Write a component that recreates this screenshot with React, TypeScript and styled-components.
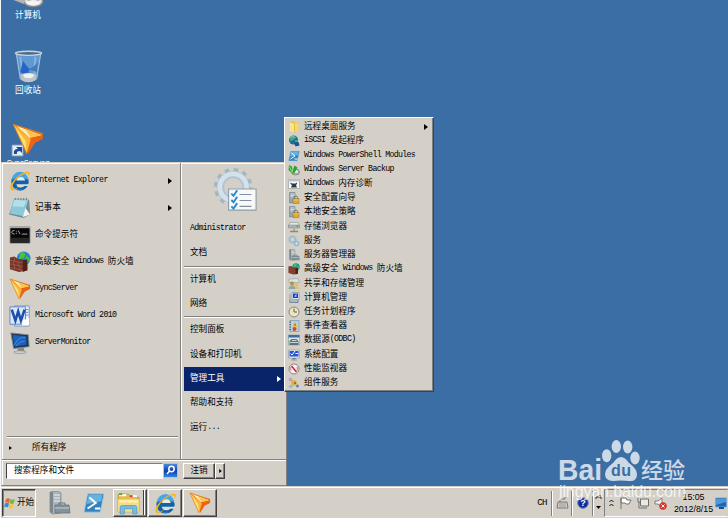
import React from 'react';
import styled, { createGlobalStyle, css } from 'styled-components';

const palette = {
	desktop: '#3a6ea5',
	face: '#d4d0c8',
	shadow: '#808080',
	dark: '#404040',
	navy: '#0a246a',
};

const GlobalStyle = createGlobalStyle`
	* {
		box-sizing: border-box;
	}

	body {
		margin: 0;
		background-color: ${palette.desktop};
		font-family: 'Liberation Mono', 'Noto Sans CJK SC', monospace;
		font-size: 8.5px;
		color: #000;
	}

	svg {
		display: block;
		flex-shrink: 0;
	}
`;

const raised = css`
	border: 1px solid;
	border-color: #fff ${palette.dark} ${palette.dark} #fff;
	box-shadow: inset -1px -1px 0 ${palette.shadow};
`;

const Screen = styled.div`
	position: relative;
	display: grid;
	grid-template-rows: 1fr 32px;
	width: 728px;
	height: 518px;
	overflow: hidden;
	background-color: ${palette.desktop};
	border-left: 1px solid #f4f6f8;
`;

const DesktopIcons = styled.div`
	display: flex;
	flex-direction: column;
	width: 54px;
	height: 164px;
	overflow: hidden;
`;

const DesktopIcon = styled.div<{ $height: number }>`
	display: flex;
	flex-direction: column;
	align-items: center;
	flex-shrink: 0;
	justify-content: flex-end;
	gap: 1px;
	height: ${(p) => p.$height}px;
	color: #fff;
`;

const StartPanel = styled.div`
	position: absolute;
	left: 0;
	top: 162px;
	width: 286px;
	height: 324px;
	display: grid;
	grid-template-rows: 1fr 25px;
	background-color: ${palette.face};
	border: 1px solid;
	border-color: #d4d0c8 ${palette.shadow} ${palette.shadow} #d4d0c8;
	box-shadow: inset 1px 1px 0 #fff;
`;

const Columns = styled.div`
	display: grid;
	grid-template-columns: 179px 1fr;
	border-bottom: 1px solid ${palette.shadow};
	box-shadow: 0 1px 0 #fff;
`;

const Programs = styled.div`
	display: flex;
	flex-direction: column;
	padding: 4px 2px 0 5px;
	border-right: 1px solid ${palette.shadow};
`;

const Program = styled.div`
	display: flex;
	align-items: center;
	gap: 4px;
	height: 27px;
	padding: 0 6px 0 2px;
`;

const AllPrograms = styled.div`
	display: flex;
	align-items: center;
	gap: 20px;
	margin-top: auto;
	height: 23px;
	border-top: 1px solid ${palette.shadow};
	box-shadow: inset 0 1px 0 #fff;
`;

const Places = styled.div`
	display: flex;
	flex-direction: column;
	padding: 2px 0 0 3px;
	box-shadow: inset 1px 0 0 #fff;
`;

const UserPicture = styled.div`
	display: flex;
	justify-content: center;
	height: 52px;
	padding-top: 2px;
`;

const Place = styled.div<{ $active?: boolean }>`
	display: flex;
	align-items: center;
	justify-content: space-between;
	height: 24.3px;
	padding: 0 5px 0 6px;
	color: ${(p) => (p.$active ? '#fff' : '#000')};
	background-color: ${(p) => (p.$active ? palette.navy : 'transparent')};
`;

const Divider = styled.div`
	height: 2px;
	border-top: 1px solid ${palette.shadow};
	border-bottom: 1px solid #fff;
`;

const PanelFooter = styled.div`
	display: flex;
	align-items: flex-start;
	padding: 3px 0 0 4px;
`;

const SearchBox = styled.div`
	display: flex;
	align-items: center;
	width: 157px;
	height: 16px;
	padding-left: 7px;
	background-color: #fff;
	border: 1px solid;
	border-color: ${palette.shadow} #fff #fff ${palette.dark};
`;

const SearchButton = styled.div`
	display: flex;
	align-items: center;
	justify-content: center;
	width: 15px;
	height: 15px;
	background: linear-gradient(#4f86dc, #0b3fae 55%, #2f86e6);
	border: 1px solid #aac4ec;
`;

const PushButton = styled.div<{ $width: number }>`
	${raised}
	display: flex;
	align-items: center;
	justify-content: center;
	width: ${(p) => p.$width}px;
	height: 16px;
`;

const LogOff = styled.div`
	display: flex;
	margin-left: 5px;
`;

const Submenu = styled.div`
	${raised}
	position: absolute;
	left: 283px;
	top: 117px;
	width: 150px;
	height: 275px;
	padding: 2px 2px 0 3px;
	background-color: ${palette.face};
`;

const SubmenuItem = styled.div`
	display: flex;
	align-items: center;
	gap: 4px;
	height: 14.22px;
	padding-right: 3px;
`;

const Arrow = styled.i`
	margin-left: auto;
	border: 3px solid transparent;
	border-left: 4px solid currentColor;
	border-right: 0;
`;

const AllArrow = styled.i`
	margin-left: 2px;
	border: 2px solid transparent;
	border-left: 3px solid currentColor;
	border-right: 0;
`;

const TextLine = styled.span<{ $size?: number }>`
	padding-top: 1px;
	font-size: ${(p) => p.$size ?? 8.6}px;
	line-height: 13px;
	white-space: pre;
`;

const Latin = styled.span`
	font-size: 0.96em;
	line-height: 0;
	letter-spacing: -0.082em;
	vertical-align: 1.3px;
`;

const Taskbar = styled.div`
	display: flex;
	align-items: flex-start;
	padding: 3px 0 0 1px;
	background-color: ${palette.face};
	box-shadow: inset 0 1px 0 ${palette.face}, inset 0 2px 0 #fff;
`;

const StartButton = styled.div`
	display: flex;
	align-items: center;
	justify-content: center;
	gap: 1px;
	width: 34px;
	height: 28px;
	border: 1px solid;
	border-color: ${palette.dark} #fff #fff ${palette.dark};
	box-shadow: inset 1px 1px 0 ${palette.shadow};
`;

const QuickLaunch = styled.div`
	display: flex;
	align-items: center;
	gap: 12px;
	height: 28px;
	padding-left: 11px;
	margin-right: 8px;
`;

const TaskButton = styled.div<{ $stacked?: boolean }>`
	${raised}
	display: flex;
	align-items: center;
	justify-content: center;
	width: 34px;
	height: 28px;
	margin-right: 1px;
	padding-right: ${(p) => (p.$stacked ? 3 : 0)}px;
	${(p) =>
		p.$stacked &&
		css`
			box-shadow: inset -1px -1px 0 ${palette.shadow}, inset -2px 0 0 #fff,
				inset -3px 0 0 ${palette.dark};
		`}
`;

const Language = styled.div`
	display: flex;
	align-items: center;
	height: 28px;
	margin-left: auto;
`;

const Separator = styled.div`
	width: 2px;
	height: 25px;
	border-left: 1px solid ${palette.shadow};
	border-right: 1px solid #fff;
`;

const LanguageSlot = styled.div<{ $width: number }>`
	display: flex;
	align-items: center;
	justify-content: center;
	width: ${(p) => p.$width}px;
`;

const Tray = styled.div`
	display: flex;
	align-items: center;
	gap: 5px;
	width: 124px;
	height: 28px;
	padding-left: 4px;
	border: 1px solid;
	border-color: ${palette.shadow} transparent #fff ${palette.shadow};
`;

const Clock = styled.div`
	display: flex;
	flex-direction: column;
	align-items: center;
	width: 39px;
	margin: 0 -3px 0 2px;
	font-family: 'Liberation Sans', sans-serif;
	font-size: 8.8px;
	line-height: 12px;
	white-space: nowrap;
`;

const Watermark = styled.svg`
	position: absolute;
	left: 554px;
	top: 436px;
`;

type TextProps = {
	text: string;
	size?: number;
};

/* Latin runs take half the width of a Chinese character */
const Label: React.FC<TextProps> = ({ text, size }) => (
	<TextLine $size={size}>
		{text
			.split(/([\x20-\x7e]+)/)
			.filter(Boolean)
			.map((run, index) =>
				/^[\x20-\x7e]/.test(run) ? <Latin key={index}>{run}</Latin> : run
			)}
	</TextLine>
);

type IconName =
	| 'computer'
	| 'bin'
	| 'sync'
	| 'ie'
	| 'notepad'
	| 'cmd'
	| 'firewall'
	| 'word'
	| 'monitor'
	| 'gearlist'
	| 'folder'
	| 'globe'
	| 'powershell'
	| 'backup'
	| 'memory'
	| 'lock'
	| 'storage'
	| 'gears'
	| 'server'
	| 'share'
	| 'manage'
	| 'clock'
	| 'event'
	| 'odbc'
	| 'config'
	| 'perf'
	| 'component'
	| 'windows'
	| 'explorer';

/* every drawing fits a 24 x 24 box */
const drawings: Record<IconName, React.ReactNode> = {
	computer: (
		<>
			<path d='M1 3h14v13H1z' fill='#dce5eb' stroke='#778' />
			<ellipse cx='16' cy='19' rx='7' ry='4' fill='#ddd' stroke='#888' />
			<path d='M1 18l5-4 4 3-1 4z' fill='#b4b4b4' />
			<path d='M12 14h8v5h-8z' fill='#9a9a9a' />
			<ellipse cx='16' cy='20' rx='5' ry='2' fill='#f5f5f5' />
		</>
	),
	bin: (
		<>
			<path d='M3 2l3 19q6 4 12 0l3-19z' fill='#6299d2' stroke='#a8c6e0' strokeWidth='.7' />
			<path d='M6 5l2 15M17 5l-1 15' stroke='#86b3de' strokeWidth='1.5' />
			<path d='M8 8l3 4 2 2-1 2 2 1-4 2-4-3z' fill='#2864c8' />
			<path d='M12 14q5-2 7-6l-1 8z' fill='#427bb8' />
			<path d='M6 18q6-3 12 0l-1 4q-5 3-10 0z' fill='#bfc4c7' />
			<path d='M8 18q4-2 8 0l-1 2q-3 1-6 0z' fill='#f0f2f2' />
			<ellipse cx='12' cy='2.4' rx='9.500' ry='1.5' fill='#4b6c8c' stroke='#cdd6dc' />
		</>
	),
	sync: (
		<>
			<path d='M1 1l22 7v4l-6 3-5 8z' fill='#ea6413' />
			<path d='M1 1l13 11-3 11z' fill='#f9b73a' />
			<path d='M1 1l9 12 1 8z' fill='#ffdf78' />
			<path d='M3 2l10 9 9-2z' fill='#fff0a8' />
			<path d='M10 5l4 6 8-2z' fill='#ffc14d' />
			<path d='M1 1l22 7M1 1l10 22' stroke='#d98618' strokeWidth='.7' />
		</>
	),
	ie: (
		<>
			<circle cx='12' cy='13' r='9.500' fill='#1560a8' />
			<path d='M3 11a9 9 0 0 1 18 0q-9-5-18 0z' fill='#4aa5e4' />
			<path d='M8 11.500q1-4 5-4t4.500 4z' fill='#e6eee8' />
			<path d='M8 15.500h14l-1 2h-4q-2 2-5 1.500-3 0-4-3.500z' fill='#d9ded8' />
			<path d='M4 19q5 4 12 2-6 3-12-2z' fill='#52b9f0' />
			<path d='M3 22C-3 18 10 4 19 2c5-1 4 3 2 5 1-4-1-4-4-3C9 7 2 17 4 20c2 2 5-1 7-2-3 3-6 5-8 4z' fill='#f0b51c' />
		</>
	),
	notepad: (
		<>
			<path d='M6 2l16 1 1 16-7 4L0 19z' fill='#728d94' />
			<path d='M5 2l16 1-5 18L1 18z' fill='#8cc8da' />
			<path d='M6 3l13 1-3 7L4 10z' fill='#b2dfe9' />
			<path d='M18 12l5 7-8 3z' fill='#f4f4ed' />
			<path d='M7 1v2M10 1v2M13 1v2M16 1v2M19 1v2' stroke='#555' strokeWidth='.8' />
		</>
	),
	cmd: (
		<>
			<path d='M1 3h22v18H1z' fill='#070707' stroke='#aaa' />
			<path d='M1 4h22' stroke='#ccc' />
			<path d='M6 7q-3 0-3 2t3 2M8 8v1M8 10v1M10 7l2 4M14 11h6' fill='none' stroke='#ddd' strokeWidth='.8' />
			<path d='M2 15h20v5H2z' fill='#262626' />
		</>
	),
	firewall: (
		<>
			<circle cx='16' cy='8' r='7.500' fill='#2683cf' />
			<path d='M12 2q5-2 6 2l-2 4-5 1zM19 5l4 4-4 6-2-4z' fill='#4bc13e' />
			<path d='M1 7l5-1 4 3 5 0v3l5 1v8l-9 2-10-3z' fill='#783427' />
			<path d='M15 10l5-1v12l-5 2z' fill='#4e2119' />
			<path d='M1 10l14 3M1 14l14 3M1 18l14 3M6 7v4M5 11v4M10 12v4M6 15v4M12 16v5' stroke='#a86659' strokeWidth='.7' />
		</>
	),
	word: (
		<>
			<path d='M6 1h16v22H6z' fill='#edf3fc' stroke='#6d93cc' />
			<path d='M18 5h3M18 8h3M18 11h3' stroke='#5581c4' />
			<path d='M1 2h17v19H1z' fill='#dbe7f8' stroke='#5a86c4' />
			<path d='M3 5l4 12 3-10 3 10 4-12' fill='none' stroke='#1b4fae' strokeWidth='2.8' />
			<path d='M15 17l7-3v8h-8z' fill='#fff' />
		</>
	),
	monitor: (
		<>
			<path d='M2 1l19 2 1 13-17 2z' fill='#20364c' stroke='#7e8d99' />
			<path d='M4 3l15 2v9L6 16z' fill='#1b60ba' />
			<path d='M6 14q4-9 12-8M8 15q3-5 9-5' fill='none' stroke='#5ba6e6' strokeWidth='.7' />
			<path d='M9 18l7-1 1 4h-7z' fill='#888' />
			<ellipse cx='12' cy='22' rx='7' ry='1.5' fill='#ccd0d2' stroke='#888' strokeWidth='.7' />
		</>
	),
	gearlist: (
		<>
			<circle cx='11' cy='11' r='7' fill='none' stroke='#afc4d3' strokeWidth='4' />
			<circle cx='11' cy='11' r='9.500' fill='none' stroke='#a3b6c4' strokeWidth='2' strokeDasharray='2.500 2.474' />
			<circle cx='11' cy='11' r='7.300' fill='none' stroke='#d3e1eb' strokeWidth='2.600' />
			<path d='M8.500 12h15v11.500h-15z' fill='#f6f8fa' stroke='#8f9da8' strokeWidth='.6' />
			<path d='M10 14.500l1.200 1.200 2-3M10 18l1.200 1.200 2-3M10 21.500l1.200 1.200 2-3' fill='none' stroke='#278ac8' />
			<path d='M14.500 15h6.500M14.500 18.300h6.500M14.500 21.500h6.500' stroke='#858da0' strokeWidth='.6' />
		</>
	),
	folder: (
		<>
			<path d='M3 1h9l2 2h7v18l-8 2-10-2z' fill='#e5bd4a' />
			<path d='M3 2l9 3v18l-9-2z' fill='#f8e28c' />
			<path d='M14 4h7v17l-7 1z' fill='#f4d777' />
		</>
	),
	globe: (
		<>
			<circle cx='11' cy='10' r='9' fill='#176fa9' />
			<path d='M5 3q8-3 10 2l-4 5-7 2zM14 9l6 2-5 8z' fill='#4aaf65' />
			<path d='M12 15l9-1 2 7-8 2z' fill='#234f95' />
			<path d='M3 5q7-4 13 0' stroke='#b4e4ec' fill='none' />
		</>
	),
	powershell: (
		<>
			<path d='M5 2h18l-4 20H1z' fill='#3482be' stroke='#a5cbe4' />
			<path d='M6 3h15l-1 7L4 13z' fill='#66b3df' />
			<path d='M7 6l7 6-9 6M13 18h6' fill='none' stroke='#fff' strokeWidth='2' />
		</>
	),
	backup: (
		<>
			<ellipse cx='15' cy='16' rx='8' ry='6' fill='#aaa' stroke='#666' />
			<ellipse cx='16' cy='15' rx='4' ry='3' fill='#eee' />
			<path d='M2 2l6 3 1 8 4-10 6 4-6 11-5 1-7-7z' fill='#28a33a' />
			<path d='M3 5l5 12 2-7' fill='none' stroke='#8ae25a' strokeWidth='2' />
		</>
	),
	memory: (
		<>
			<path d='M1 3h22v18H1z' fill='#f7f8f9' stroke='#788' />
			<path d='M1 3h22v4H1z' fill='#b8c4cf' />
			<path d='M5 9l3 2h7l3-2v3l-2 2 2 5H6l2-5-3-2z' fill='#303844' />
		</>
	),
	lock: (
		<>
			<path d='M3 1h11v21H3z' fill='#93a5b0' stroke='#677985' />
			<path d='M5 4h8M5 7h8M5 10h5' stroke='#e7edef' strokeWidth='1.500' />
			<path d='M13 14v-3q0-3 3-3t3 3v3' fill='none' stroke='#777' strokeWidth='2' />
			<path d='M10 13h12v10H10z' fill='#dfa92e' stroke='#97702c' />
			<path d='M11 16h10' stroke='#ffe187' />
		</>
	),
	storage: (
		<>
			<path d='M4 3h16l3 6H1z' fill='#e2e8ea' stroke='#7a858b' />
			<path d='M1 8h22v6H1z' fill='#aab3b8' stroke='#7a858b' />
			<circle cx='19' cy='10' r='2' fill='#40b934' />
			<path d='M12 15v6' stroke='#c99a3e' strokeWidth='3' />
			<path d='M4 21h16' stroke='#888' strokeWidth='3' />
		</>
	),
	gears: (
		<>
			<circle cx='9' cy='9' r='6' fill='none' stroke='#94bbd0' strokeWidth='3' />
			<circle cx='9' cy='9' r='8' fill='none' stroke='#a5c5d6' strokeWidth='2' strokeDasharray='2 2' />
			<circle cx='17' cy='17' r='4' fill='#dce8ed' stroke='#8fb7cb' strokeWidth='3' />
		</>
	),
	server: (
		<>
			<path d='M3 1l8-1 3 2v20l-9 1-2-2z' fill='#a9b5ba' stroke='#718188' strokeWidth='.7' />
			<path d='M3 1h3v21l-3-1z' fill='#7b898f' />
			<path d='M7 4h6M7 7h6M7 10h6' stroke='#e9eff1' />
			<path d='M12 14v-2h6v2' fill='none' stroke='#687680' />
			<path d='M8 14h14l1 8H8z' fill='#84939b' stroke='#5e6e77' strokeWidth='.7' />
			<path d='M8 17h14' stroke='#c8d1d4' />
		</>
	),
	share: (
		<>
			<path d='M2 2l18-1 3 8H2z' fill='#dce0df' stroke='#809197' />
			<path d='M11 14h8l4 8H9z' fill='#e6c36a' />
			<circle cx='8' cy='11' r='4' fill='#bd8e3a' />
			<path d='M1 22q1-7 7-7t7 7z' fill='#7fb0ae' />
			<circle cx='17' cy='13' r='4' fill='#e7bd75' />
		</>
	),
	manage: (
		<>
			<path d='M8 1h14v14H8z' fill='#e4eaf0' stroke='#5e7183' />
			<path d='M10 3h10v9H10z' fill='#1a35d2' />
			<path d='M12 9l5-6v7z' fill='#8dd4ff' />
			<path d='M2 4h5v15H2z' fill='#a8b9c1' />
			<path d='M3 16h18v6H3z' fill='#768795' />
			<path d='M5 18h14' stroke='#e6edf0' strokeWidth='2' />
		</>
	),
	clock: (
		<>
			<circle cx='12' cy='12' r='10' fill='#eee3b9' stroke='#7f8a93' strokeWidth='2' />
			<path d='M12 5v7h6' fill='none' stroke='#635f57' strokeWidth='2' />
		</>
	),
	event: (
		<>
			<path d='M4 1h18v22H4z' fill='#b7d0e5' stroke='#60809c' />
			<path d='M3 4h3M3 9h3M3 14h3M3 19h3' stroke='#425b76' strokeWidth='2' />
			<path d='M14 3l6 13H8z' fill='#f0c52e' />
			<circle cx='13' cy='18' r='4' fill='#d44635' />
			<path d='M14 7v5' stroke='#b53e2b' strokeWidth='2' />
		</>
	),
	odbc: (
		<>
			<path d='M1 2h22v20H1z' fill='#d9e4eb' stroke='#698' />
			<path d='M1 2h22v5H1z' fill='#3d6e9f' />
			<path d='M3 14l4-4h10l4 4v8H3z' fill='#64717b' />
			<path d='M8 13h9M4 17h16' stroke='#c9d0d4' strokeWidth='2' />
		</>
	),
	config: (
		<>
			<path d='M1 2h22v16H1z' fill='#e6e9eb' stroke='#788691' />
			<path d='M3 4h18v11H3z' fill='#2553dc' />
			<path d='M5 9l3 3 6-8M15 9h5' fill='none' stroke='#fff' strokeWidth='2' />
			<path d='M9 18h6v3H9z' fill='#777' />
			<path d='M6 22h12' stroke='#999' strokeWidth='2' />
		</>
	),
	perf: (
		<>
			<circle cx='12' cy='12' r='10' fill='#f4f4f4' stroke='#858585' strokeWidth='2' />
			<path d='M7 6l10 12' stroke='#c72437' strokeWidth='3' />
			<path d='M6 15a8 8 0 0 1 0-7M18 8q2 5-1 9' fill='none' stroke='#d56b74' strokeWidth='2' />
		</>
	),
	component: (
		<>
			<circle cx='5' cy='5' r='4' fill='#c2a0c4' />
			<circle cx='12' cy='12' r='6' fill='#d9b448' />
			<path d='M2 17h7v4H2z' fill='#8aafd3' />
			<circle cx='19' cy='18' r='3' fill='#5d84bd' />
			<circle cx='14' cy='12' r='2' fill='#9b4b32' />
		</>
	),
	windows: (
		<>
			<path d='M4 4q4-3 8 0l-2 8q-4-3-8 0z' fill='#ed6430' />
			<path d='M13 4q4 3 9 0l-3 9q-4 2-8-1z' fill='#74b943' />
			<path d='M2 13q4-3 8 0l-2 8q-4-3-8 0z' fill='#2d91d0' />
			<path d='M11 14q4 3 8 0l-2 8q-4 2-8-1z' fill='#f7c530' />
		</>
	),
	explorer: (
		<>
			<path d='M2 3h10l2 3h8v14H2z' fill='#e4bd48' stroke='#b58a27' strokeWidth='.7' />
			<path d='M3 4h7M13 5h7' stroke='#fff' strokeWidth='2' />
			<path d='M3 3h3' stroke='#40b34a' strokeWidth='2' />
			<path d='M13 5h3' stroke='#d54438' strokeWidth='2' />
			<path d='M2 8h20v12H2z' fill='#f5dd88' />
			<path d='M3 10h18' stroke='#fff0b6' strokeWidth='2' />
			<path d='M4 22v-6q0-2 2-2h12q2 0 2 2v6h-4v-5H8v5z' fill='#77bde2' stroke='#4398c8' strokeWidth='.7' />
		</>
	),
};

const Icon: React.FC<{ name: IconName; size: number }> = ({ name, size }) => (
	<svg width={size} height={size} viewBox='0 0 24 24' fill='none'>
		{drawings[name]}
	</svg>
);

const programs: { icon: IconName; text: string; more?: boolean }[] = [
	{ icon: 'ie', text: 'Internet Explorer', more: true },
	{ icon: 'notepad', text: '记事本', more: true },
	{ icon: 'cmd', text: '命令提示符' },
	{ icon: 'firewall', text: '高级安全 Windows 防火墙' },
	{ icon: 'sync', text: 'SyncServer' },
	{ icon: 'word', text: 'Microsoft Word 2010' },
	{ icon: 'monitor', text: 'ServerMonitor' },
];

const placeGroups = [
	['Administrator', '文档'],
	['计算机', '网络'],
	['控制面板', '设备和打印机', '管理工具', '帮助和支持', '运行...'],
];

const tools: { icon: IconName; text: string }[] = [
	{ icon: 'folder', text: '远程桌面服务' },
	{ icon: 'globe', text: 'iSCSI 发起程序' },
	{ icon: 'powershell', text: 'Windows PowerShell Modules' },
	{ icon: 'backup', text: 'Windows Server Backup' },
	{ icon: 'memory', text: 'Windows 内存诊断' },
	{ icon: 'lock', text: '安全配置向导' },
	{ icon: 'lock', text: '本地安全策略' },
	{ icon: 'storage', text: '存储浏览器' },
	{ icon: 'gears', text: '服务' },
	{ icon: 'server', text: '服务器管理器' },
	{ icon: 'firewall', text: '高级安全 Windows 防火墙' },
	{ icon: 'share', text: '共享和存储管理' },
	{ icon: 'manage', text: '计算机管理' },
	{ icon: 'clock', text: '任务计划程序' },
	{ icon: 'event', text: '事件查看器' },
	{ icon: 'odbc', text: '数据源(ODBC)' },
	{ icon: 'config', text: '系统配置' },
	{ icon: 'perf', text: '性能监视器' },
	{ icon: 'component', text: '组件服务' },
];

const StartMenu: React.FC = () => (
	<StartPanel>
		<Columns>
			<Programs>
				{programs.map((v) => (
					<Program key={v.text}>
						<Icon name={v.icon} size={22} />
						<Label text={v.text} />
						{v.more && <Arrow />}
					</Program>
				))}
				<AllPrograms>
					<AllArrow />
					<Label text='所有程序' />
				</AllPrograms>
			</Programs>
			<Places>
				<UserPicture>
					<Icon name='gearlist' size={44} />
				</UserPicture>
				{placeGroups.map((group, index) => (
					<React.Fragment key={index}>
						{index > 0 && <Divider />}
						{group.map((text) => (
							<Place key={text} $active={text === '管理工具'}>
								<Label text={text} />
								{text === '管理工具' && <Arrow />}
							</Place>
						))}
					</React.Fragment>
				))}
			</Places>
		</Columns>
		<PanelFooter>
			<SearchBox>
				<Label text='搜索程序和文件' />
			</SearchBox>
			<SearchButton>
				<svg width='11' height='11' viewBox='0 0 11 11' fill='none' stroke='#fff' strokeWidth='1.5'>
					<circle cx='6.5' cy='4' r='2.7' />
					<path d='M4.500 6L2 9' />
				</svg>
			</SearchButton>
			<LogOff>
				<PushButton $width={32}>
					<Label text='注销' />
				</PushButton>
				<PushButton $width={10}>
					<svg width='3' height='4' viewBox='0 0 4 6'>
						<path d='M0 0l4 3-4 3z' />
					</svg>
				</PushButton>
			</LogOff>
		</PanelFooter>
	</StartPanel>
);

const NotificationArea: React.FC = () => (
	<>
		<Language>
			<LanguageSlot $width={18}>
				<Label text='CH' size={9.5} />
			</LanguageSlot>
			<Separator />
			<LanguageSlot $width={18}>
				<svg width='13' height='12' viewBox='0 0 13 12' fill='none' stroke='#777'>
					<path d='M2 5h9l1 6H1zM4 5V2h5V0' />
					<path d='M3 7h7M3 9h7' stroke='#999' />
				</svg>
			</LanguageSlot>
			<Separator />
			<LanguageSlot $width={19}>
				<svg width='12' height='12' viewBox='0 0 12 12'>
					<circle cx='6' cy='6' r='5.3' fill='#102c9c' stroke='#7081c4' />
					<text x='6' y='9' textAnchor='middle' fill='#fff' fontSize='9' fontWeight='700' fontFamily='Liberation Sans'>
						?
					</text>
				</svg>
			</LanguageSlot>
			<Separator />
			<LanguageSlot $width={10}>
				<svg width='8' height='16' viewBox='0 0 8 16' fill='none' stroke='#333'>
					<path d='M1 4V2h5v2M3 2V1h3' />
					<path d='M1 11h5l-2.500 3z' fill='#000' stroke='none' />
				</svg>
			</LanguageSlot>
		</Language>
		<Tray>
			<svg width='5' height='8' viewBox='0 0 5 8' fill='none' stroke='#111'>
				<path d='M.5 3l2-2 2 2M.5 7l2-2 2 2' />
			</svg>
			<svg width='13' height='12' viewBox='0 0 13 12' fill='#fff' stroke='#77736e'>
				<path d='M2 1v11M2 1h5l1 2h4l-2 4H7L6 6H2z' />
			</svg>
			<svg width='12' height='12' viewBox='0 0 12 12' fill='#e8e8e4' stroke='#706e69'>
				<path d='M3.500 2h8v7h-8zM5 11h5M1 1v4h2M2 5v6h3' />
			</svg>
			<svg width='13' height='13' viewBox='0 0 13 13' fill='#f5f5f2' stroke='#807d78'>
				<path d='M1 4h3l4-3v9L4 7H1z' />
				<circle cx='9' cy='9' r='3.500' fill='#df362b' stroke='#b5302c' strokeWidth='.5' />
				<path d='M7.500 7.500l3 3M10.500 7.500l-3 3' stroke='#fff' />
			</svg>
			<Clock>
				<span>15:05</span>
				<span>2012/8/15</span>
			</Clock>
			<svg width='12' height='12' viewBox='0 0 12 12'>
				<path d='M.5 1h11v9H.5z' fill='#1b65b6' stroke='#6eaad8' />
				<path d='M1 2h10v3L1 8z' fill='#4d98d8' />
				<path d='M4 10h5v2H4z' fill='#214d7a' />
			</svg>
		</Tray>
	</>
);

const App: React.FC = () => (
	<>
		<GlobalStyle />
		<Screen>
			<DesktopIcons>
				<DesktopIcon $height={23}>
					<Icon name='computer' size={32} />
					<Label text='计算机' />
				</DesktopIcon>
				<DesktopIcon $height={75}>
					<Icon name='bin' size={33} />
					<Label text='回收站' />
				</DesktopIcon>
				<DesktopIcon $height={74}>
					<svg width='34' height='34' viewBox='0 0 34 34'>
						<g transform='translate(1 0) scale(1.34)'>{drawings.sync}</g>
						<path d='M1 22h11v11H1z' fill='#e7edf5' stroke='#8097b4' />
						<path d='M3 31q-1-5 4-5l-2-2h6v6l-2-2q-4 0-3 3z' fill='#174c9c' />
					</svg>
					<Label text='SyncServer' />
				</DesktopIcon>
			</DesktopIcons>
			<Taskbar>
				<StartButton>
					<Icon name='windows' size={12} />
					<Label text='开始' />
				</StartButton>
				<QuickLaunch>
					<Icon name='server' size={24} />
					<Icon name='powershell' size={22} />
				</QuickLaunch>
				<TaskButton $stacked>
					<Icon name='explorer' size={25} />
				</TaskButton>
				<TaskButton>
					<Icon name='ie' size={23} />
				</TaskButton>
				<TaskButton>
					<Icon name='sync' size={22} />
				</TaskButton>
				<NotificationArea />
			</Taskbar>
			<StartMenu />
			<Submenu>
				{tools.map((v) => (
					<SubmenuItem key={v.text}>
						<Icon name={v.icon} size={12} />
						<Label text={v.text} />
						{v.icon === 'folder' && <Arrow />}
					</SubmenuItem>
				))}
			</Submenu>
			<Watermark width='135' height='68' viewBox='0 0 135 68' fill='#fff' opacity='.74'>
				<text x='3' y='44' fontFamily='Liberation Sans, sans-serif' fontSize='29' fontWeight='700' textLength='44' lengthAdjust='spacingAndGlyphs'>
					Bai
				</text>
				<ellipse cx='51.700' cy='19.700' rx='4.700' ry='6.500' />
				<ellipse cx='61.300' cy='10.500' rx='4.700' ry='6.500' />
				<ellipse cx='72.700' cy='11' rx='4.700' ry='6.500' />
				<ellipse cx='80' cy='22' rx='4.700' ry='6.500' />
				<path d='M66 21q4 0 8 6 8 6 8 11 0 8-8 7-8-1-16 0-8 0-8-7 0-5 8-11 4-6 8-6z' />
				<text x='56' y='40' fill={palette.desktop} fontFamily='Liberation Sans, sans-serif' fontSize='16' fontWeight='700' textLength='20'>
					du
				</text>
				<text x='86' y='42' fontFamily='Noto Sans CJK SC, sans-serif' fontSize='22' fontWeight='500'>
					经验
				</text>
				<text x='4' y='61' fontFamily='Liberation Sans, sans-serif' fontSize='16' textLength='127'>
					jingyan.baidu.com
				</text>
			</Watermark>
		</Screen>
	</>
);

export default App;
